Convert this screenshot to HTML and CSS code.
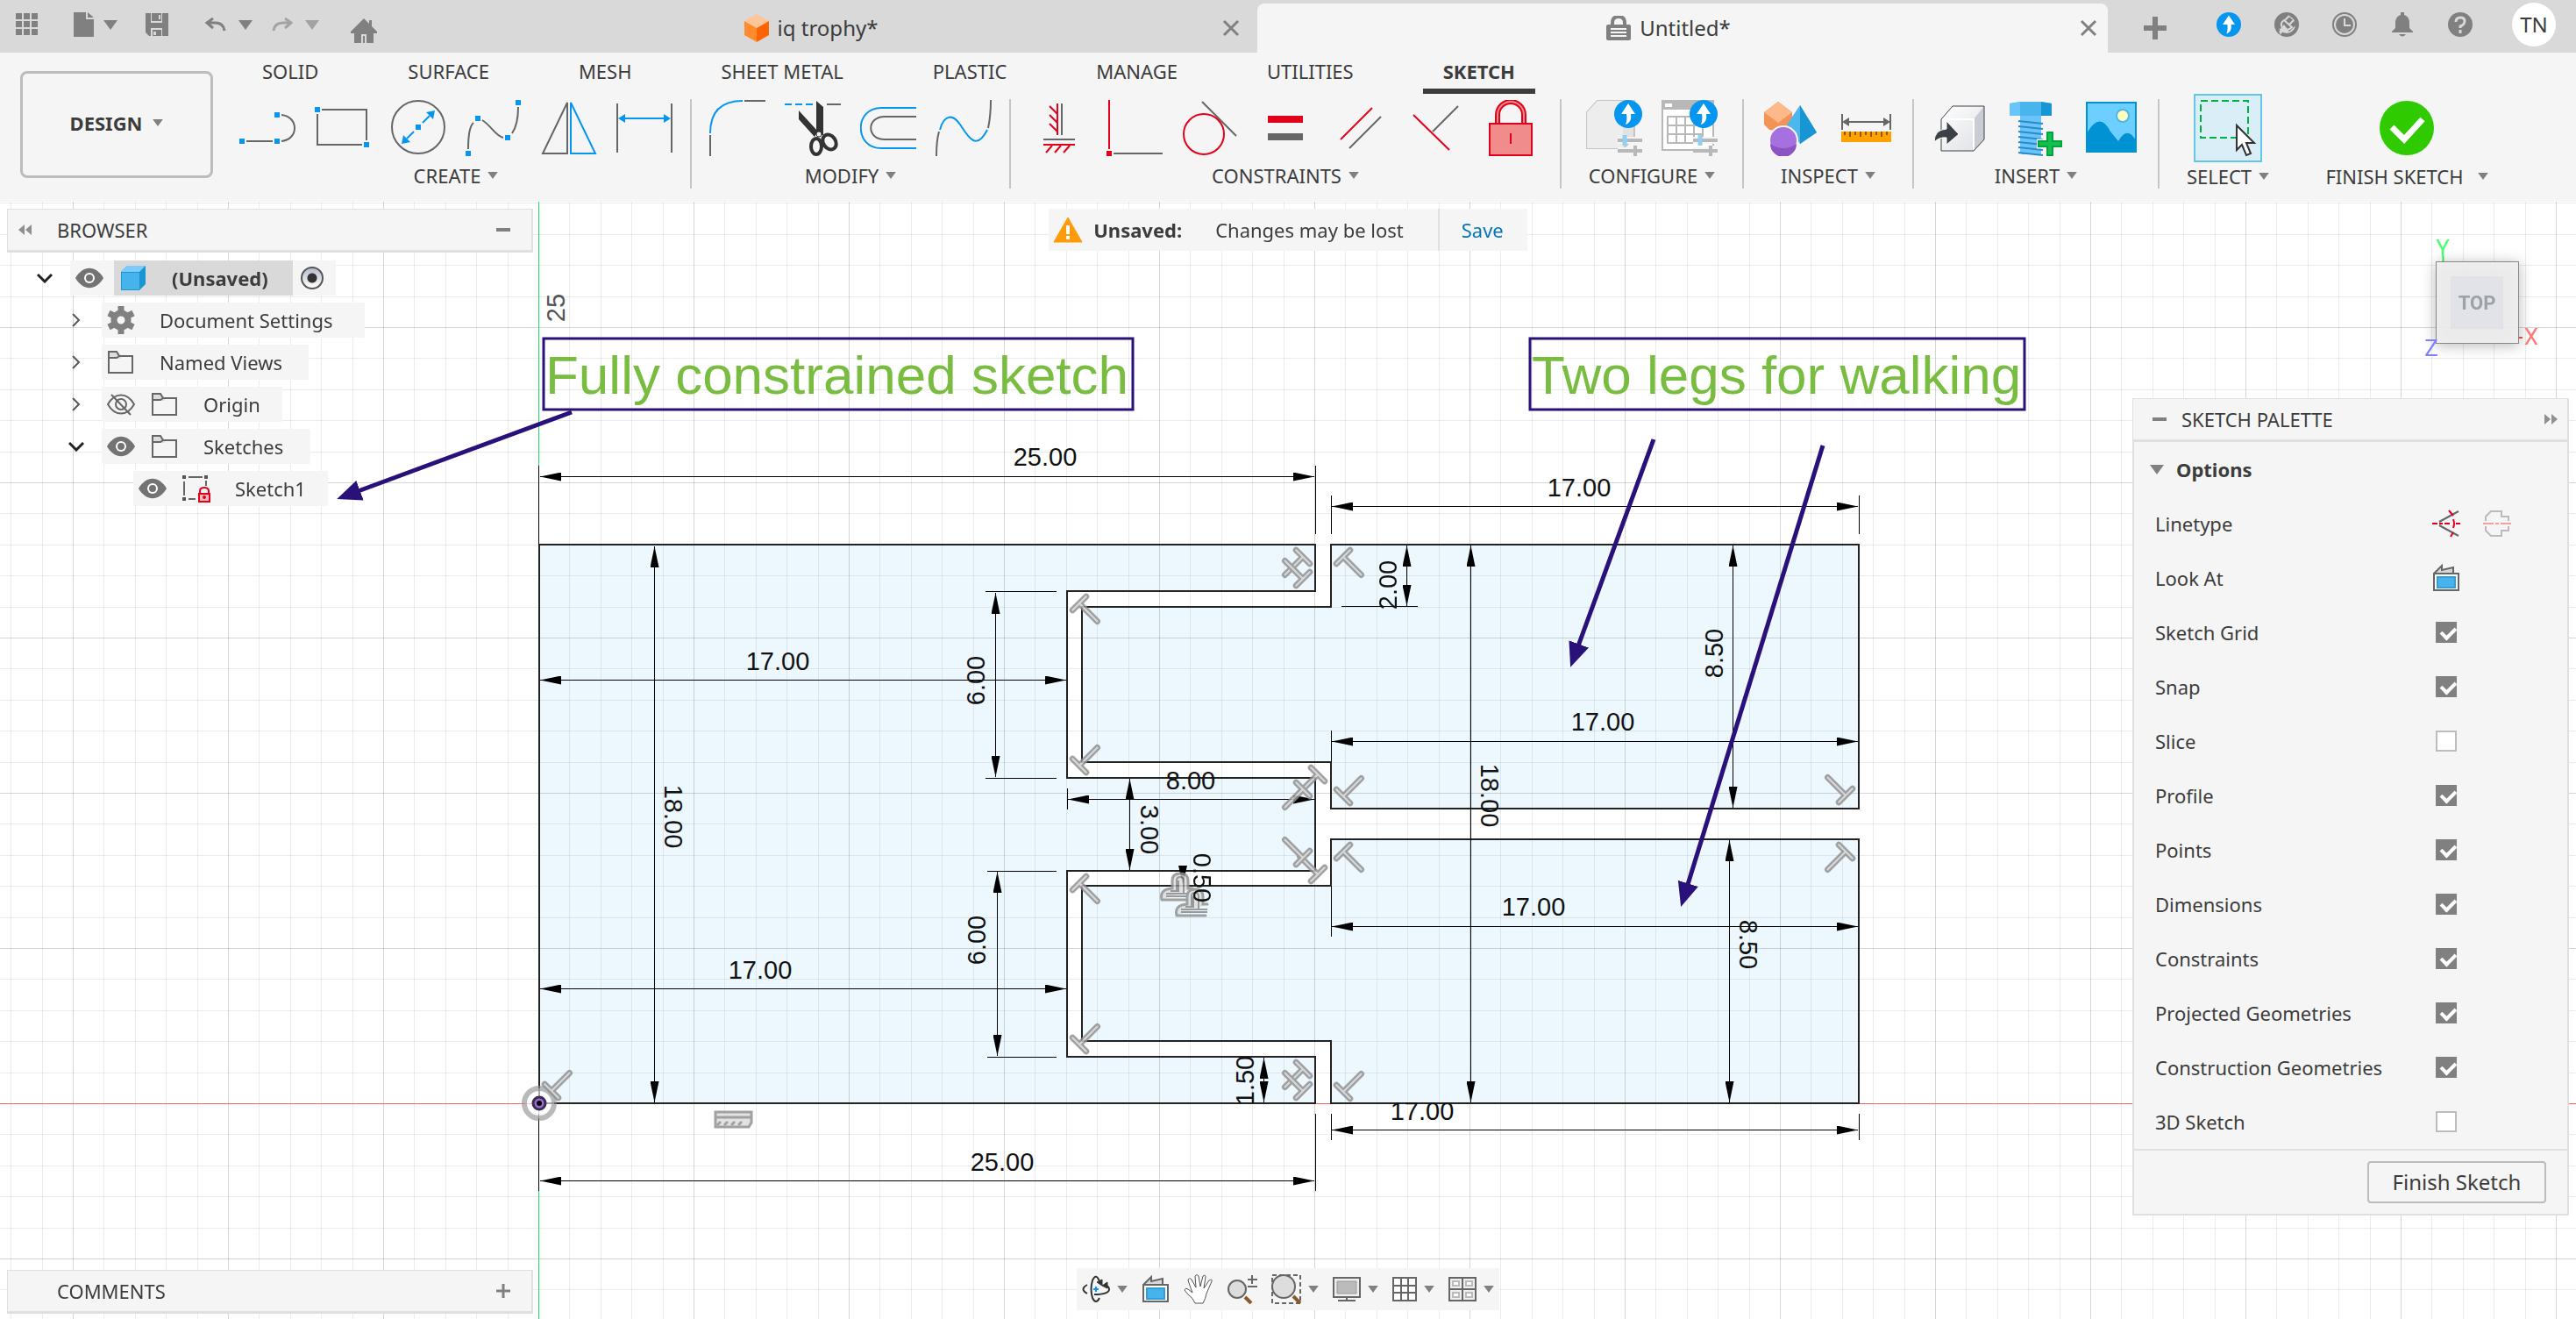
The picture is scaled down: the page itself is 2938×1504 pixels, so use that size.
FILE: index.html
```html
<!DOCTYPE html>
<html lang="en">
<head>
<meta charset="utf-8">
<title>Untitled* – Sketch</title>
<link rel="stylesheet" href="styles.css">
</head>
<body>
<svg class="defs" aria-hidden="true">
  <defs>
    <symbol id="i-tri" viewBox="0 0 16 11"><path d="M0 0h16L8 11z" fill="currentColor"/></symbol>
    <symbol id="i-close" viewBox="0 0 20 20"><path d="M2 2l16 16M18 2L2 18" stroke="#808080" stroke-width="3"/></symbol>
    <symbol id="i-up" viewBox="0 0 32 32"><circle cx="16" cy="16" r="16" fill="#0696f0"/><path d="M16 4l8 12h-5c1 6-1 10-6 12 1-3 2-7 1-12H8z" fill="#fff"/></symbol>
    <symbol id="i-eye" viewBox="0 0 32 24"><path d="M0 12C9-3 23-3 32 12C23 27 9 27 0 12z" fill="#737373"/><circle cx="16" cy="12" r="6" fill="#fff"/><circle cx="16" cy="12" r="4" fill="#737373"/></symbol>
    <symbol id="i-folder" viewBox="0 0 32 28"><path d="M2 2h10l4 4v4H2z" fill="#ddd"/><path d="M2 2h9l3 5h15v19H2zM2 9h9l3-2" fill="none" stroke="#666" stroke-width="2"/></symbol>
    <symbol id="i-right" viewBox="0 0 12 18"><path d="M2 2l7 7-7 7" fill="none" stroke="#555" stroke-width="2"/></symbol>
    <symbol id="i-down" viewBox="0 0 18 12"><path d="M1 2l8 8 8-8" fill="none" stroke="#222" stroke-width="3"/></symbol>
    <symbol id="i-look" viewBox="0 0 32 32"><path d="M2 11L11 2v5l13-3v7" fill="#d8d8d8" stroke="#666" stroke-width="2"/><path d="M2 11h28v19H2z" fill="#fff" stroke="#666" stroke-width="2"/><path d="M6 15h20v12H6z" fill="#47b3ec" stroke="#339fd8" stroke-width="2"/></symbol>
    <symbol id="i-sliders" viewBox="0 0 28 28"><path d="M0 9h28M0 21h28M20 15v12" stroke="#f5f5f5" stroke-width="8"/><path d="M0 9h28M0 21h28" stroke="#b8b8b8" stroke-width="4"/><path d="M20 15v12" stroke="#b8b8b8" stroke-width="4"/><path d="M8 3v12" stroke="#8fd0f5" stroke-width="5"/></symbol>
    <g id="perp"><path class="g-out" d="M-11 0H11M0 0V29"/><path class="g-in" d="M-11 0H11M0 0V29"/></g>
    <g id="offset"><path class="g-out g-fine" d="M3 31h33M3 31q-3-12 12-13V9q0-8 9-8t9 8v9h5"/><path class="g-fine2" d="M8 27h30M8 24h30M13 21h7V9q0-4 4-4t4 4v15M22 9v13"/></g>
    <marker id="tip" viewBox="0 0 24 10" markerWidth="24" markerHeight="10" refX="24" refY="5" orient="auto-start-reverse" markerUnits="userSpaceOnUse"><path d="M0 0L24 5L0 10z" fill="#000"/></marker>
    <marker id="callout-tip" viewBox="0 0 28 24" markerWidth="28" markerHeight="24" refX="8" refY="12" orient="auto" markerUnits="userSpaceOnUse"><path d="M0 0L28 12L0 24z" fill="#2a117a"/></marker>
    <pattern id="grid" x="614" y="1258" width="177" height="177" patternUnits="userSpaceOnUse">
      <path d="M35.5 0V177M71.5 0V177M106.5 0V177M142.5 0V177M0 35.5H177M0 71.5H177M0 106.5H177M0 142.5H177" stroke="#000" stroke-opacity=".075"/>
      <path d="M.5 0V177M0 .5H177" stroke="#000" stroke-opacity=".16"/>
    </pattern>
    <linearGradient id="white-box" x1="0" y1="0" x2="1" y2="1"><stop offset="0" stop-color="#fff"/><stop offset="1" stop-color="#dcdfe4"/></linearGradient>
  </defs>
</svg>

<header class="titlebar">
  <div class="quick">
    <button class="plain q-apps" aria-label="Data panel"><svg width="26" height="26" viewBox="0 0 26 26" fill="#808080"><path d="M1 0h7v7H1zM10 0h7v7h-7zM19 0h7v7h-7zM1 9h7v7H1zM10 9h7v7h-7zM19 9h7v7h-7zM1 18h7v7H1zM10 18h7v7h-7zM19 18h7v7h-7z"/></svg></button>
    <button class="plain q-file" aria-label="File"><svg width="24" height="28" viewBox="0 0 24 28" fill="#808080"><path d="M0 0h14v8h9v20H0zM16 0l7 6h-7z"/></svg><svg class="tri"><use href="#i-tri"/></svg></button>
    <button class="plain q-save" aria-label="Save file"><svg width="26" height="26" viewBox="0 0 26 26"><path d="M0 0h26v26H4l-4-4z" fill="#808080"/><path d="M6 0h13v11H6zM6 17h13v9H6z" fill="#d9d9d9"/><path d="M7 0h11v9H7zM8 19h10v7H8z" fill="#808080"/><path d="M15 2h2v5h-2zM9 21h3v4H9z" fill="#d9d9d9"/></svg></button>
    <button class="plain q-undo" aria-label="Undo"><svg width="24" height="16" viewBox="0 0 24 16" fill="none" stroke="#808080" stroke-width="3"><path d="M9 1L2 6l7 6M2 6h9q10 0 11 9"/></svg><svg class="tri"><use href="#i-tri"/></svg></button>
    <button class="plain q-redo" aria-label="Redo"><svg width="24" height="16" viewBox="0 0 24 16" fill="none" stroke="#a3a3a3" stroke-width="3"><path d="M15 1l7 5-7 6M22 6h-9Q3 6 2 15"/></svg><svg class="tri"><use href="#i-tri"/></svg></button>
    <button class="plain q-home" aria-label="Home"><svg width="30" height="28" viewBox="0 0 30 28" fill="#808080"><path d="M15 0l6 6V2h3v7l6 6v2h-4v11h-8V18h-6v10H4V17H0v-2zM14 20h2v8h-2z"/></svg></button>
  </div>
  <nav class="doc-tabs" aria-label="Documents">
    <div class="doc-tab"><a href="#trophy"><svg width="28" height="32" viewBox="0 0 28 32"><path d="M14 0l14 8-14 8L0 8z" fill="#ffc59a"/><path d="M0 8l14 8v16L0 24z" fill="#ff8b2c"/><path d="M28 8l-14 8v16l14-8z" fill="#ff6400"/></svg>iq trophy*</a><button class="plain" aria-label="Close iq trophy"><svg width="20" height="20"><use href="#i-close"/></svg></button></div>
    <div class="doc-tab doc-active"><a href="#untitled"><svg width="28" height="28" viewBox="0 0 28 28"><path d="M7 12V8q0-7 7-7t7 7v4" fill="none" stroke="#808080" stroke-width="4"/><rect y="10" width="28" height="18" rx="2" fill="#808080"/><path d="M5 15h18M5 19h18M5 23h18" stroke="#f5f5f5" stroke-width="2"/></svg>Untitled*</a><button class="plain" aria-label="Close Untitled"><svg width="20" height="20"><use href="#i-close"/></svg></button></div>
  </nav>
  <div class="account">
    <button class="plain new-tab" aria-label="New tab"><svg width="26" height="26" viewBox="0 0 26 26"><path d="M13 0v26M0 13h26" stroke="#808080" stroke-width="6"/></svg></button>
    <button class="plain" aria-label="Updates"><svg width="28" height="28"><use href="#i-up"/></svg></button>
    <button class="plain" aria-label="Extensions"><svg width="28" height="28" viewBox="0 0 28 28"><circle cx="14" cy="14" r="12" fill="none" stroke="#808080" stroke-width="4"/><path d="M7 18q-2-8 4-10l9 8q-3 6-9 5l-5 5z" fill="#d9d9d9"/><path d="M13 2l13 11-9 9-6-8-4 5-5-1V8z" fill="#808080"/><path d="M6 23l3-5q-3-6 2-9l9 8q-4 4-8 3M12 9l5-5M17 14l5-5" fill="none" stroke="#d9d9d9" stroke-width="2"/></svg></button>
    <button class="plain" aria-label="Job status"><svg width="28" height="28" viewBox="0 0 28 28"><circle cx="14" cy="14" r="13" fill="none" stroke="#808080" stroke-width="2"/><circle cx="14" cy="14" r="10" fill="#808080"/><path d="M14 7v8h7" fill="none" stroke="#d9d9d9" stroke-width="2"/></svg></button>
    <button class="plain" aria-label="Notifications"><svg width="28" height="28" viewBox="0 0 28 28" fill="#808080"><path d="M12 0h4v3q6 2 6 9v6l4 4v1H2v-1l4-4v-6q0-7 6-9zM10 25h8q-4 5-8 0z"/></svg></button>
    <button class="plain" aria-label="Help"><svg width="28" height="28" viewBox="0 0 28 28"><circle cx="14" cy="14" r="14" fill="#808080"/><path d="M9 11q0-5 5-5t5 4-5 6v2M14 20v4" fill="none" stroke="#d9d9d9" stroke-width="3"/></svg></button>
    <button class="plain avatar">TN</button>
  </div>
</header>

<div class="ribbon">
  <button class="design">DESIGN <svg class="tri tri-s"><use href="#i-tri"/></svg></button>
  <div class="ribbon-main">
    <nav class="modes" aria-label="Toolbar tabs">
      <a href="#solid">SOLID</a><a href="#surface">SURFACE</a><a href="#mesh">MESH</a><a href="#sheet">SHEET METAL</a><a href="#plastic">PLASTIC</a><a href="#manage">MANAGE</a><a href="#utilities">UTILITIES</a><a href="#sketch" class="mode-on">SKETCH</a>
    </nav>
    <div class="groups">
      <section class="group">
        <div class="tools">
          <button class="tool" aria-label="Line"><svg viewBox="0 0 64 64"><path class="k" d="M8 47h30M48 17c20 2 20 28 0 30"/><path class="b" d="M0 44h6v6H0zM40 44h6v6h-6zM40 14h6v6h-6z"/></svg></button>
          <button class="tool" aria-label="Rectangle"><svg viewBox="0 0 64 64"><path class="k" d="M8 11h51v35M54 51H3V16"/><path class="b" d="M0 8h6v6H0zM56 48h6v6h-6z"/></svg></button>
          <button class="tool" aria-label="Circle"><svg viewBox="0 0 64 64"><circle class="k" cx="32" cy="31" r="30"/><path class="bs" d="M37 26l8-8M27 36l-8 8"/><path class="b" d="M29 28h6v6h-6zM51 12l-2 10-8-8zM13 50l2-10 8 8z"/></svg></button>
          <button class="tool" aria-label="Spline"><svg viewBox="0 0 64 64"><path class="k" d="M3 56q0-25 6-30M19 23c10 6 15 18 24 20M53 38q7-10 7-30"/><path class="b" d="M0 58h6v6H0zM11 18h6v6h-6zM45 40h6v6h-6zM57 0h6v6h-6z"/></svg></button>
          <button class="tool" aria-label="Mirror"><svg viewBox="0 0 64 64"><path class="k" d="M30 3v58H2z"/><path class="bs" d="M34 3v58h28z"/></svg></button>
          <button class="tool" aria-label="Dimension"><svg viewBox="0 0 64 64"><path class="k" d="M1 4v56M63 4v56"/><path class="bs" d="M6 21h52"/><path class="b" d="M2 21l8-5v10zM62 21l-8-5v10z"/></svg></button>
        </div>
        <button class="menu">CREATE<svg class="tri tri-s"><use href="#i-tri"/></svg></button>
      </section>
      <section class="group">
        <div class="tools">
          <button class="tool" aria-label="Fillet"><svg viewBox="0 0 64 64"><path class="bs" d="M1 38C1 12 14 1 38 1"/><path class="k" d="M40 1h24M1 40v24"/></svg></button>
          <button class="tool" aria-label="Trim"><svg viewBox="0 0 64 64"><path class="bs" d="M0 5h34" stroke-dasharray="8 4"/><path class="k" d="M48 5h16"/><path d="M36 1l8 7v32h-8z M16 12l22 24-4 6L16 22z" fill="#333"/><ellipse cx="36" cy="53" rx="6" ry="9" fill="none" stroke="#333" stroke-width="4"/><ellipse cx="51" cy="48" rx="7" ry="9" transform="rotate(-35 51 48)" fill="none" stroke="#333" stroke-width="4"/><circle cx="39" cy="39" r="3" fill="#f5f5f5" stroke="#333"/></svg></button>
          <button class="tool" aria-label="Offset"><svg viewBox="0 0 64 64"><path class="bs" d="M64 9H24C-7 9-7 55 24 55H64"/><path class="k" d="M64 19H28C7 19 7 45 28 45H64"/></svg></button>
          <button class="tool" aria-label="Curvature"><svg viewBox="0 0 64 64"><path class="bs" d="M5 34C10 16 20 16 28 28S46 60 59 34"/><path class="k" d="M1 64q0-18 3-28M60 32q3-14 3-32"/></svg></button>
        </div>
        <button class="menu">MODIFY<svg class="tri tri-s"><use href="#i-tri"/></svg></button>
      </section>
      <section class="group group-mid">
        <div class="tools">
          <button class="tool" aria-label="Horizontal/Vertical"><svg viewBox="0 0 64 64"><path class="k" d="M35 4v36M14 45h36"/><path class="r" d="M30 4v36M30 16l-9-9M30 26l-9-9M30 36l-9-9M14 51h36M24 52l-7 8M34 52l-7 8M44 52l-7 8"/></svg></button>
          <button class="tool" aria-label="Coincident"><svg viewBox="0 0 64 64"><path class="r" d="M3 0v56"/><path d="M0 58h6v6H0z" fill="#e2001a"/><path class="k" d="M8 61h56"/></svg></button>
          <button class="tool" aria-label="Tangent"><svg viewBox="0 0 64 64"><path class="k" d="M23 2l39 39"/><circle class="r" cx="25" cy="39" r="23"/></svg></button>
          <button class="tool" aria-label="Equal"><svg viewBox="0 0 64 64"><path d="M12 18h40v8H12z" fill="#e2001a"/><path d="M12 38h40v8H12z" fill="#666"/></svg></button>
          <button class="tool" aria-label="Parallel"><svg viewBox="0 0 64 64"><path class="r" d="M9 45L45 9"/><path class="k" d="M19 55l36-36"/></svg></button>
          <button class="tool" aria-label="Perpendicular"><svg viewBox="0 0 64 64"><path class="r" d="M6 17l41 40"/><path class="k" d="M28 36L57 7"/></svg></button>
          <button class="tool" aria-label="Fix"><svg viewBox="0 0 64 64"><path d="M16 27V17a15 15 0 0 1 30 0v10" fill="none" stroke="#e2001a" stroke-width="6"/><path d="M16 27V17a15 15 0 0 1 30 0v10" fill="none" stroke="#f08c8c" stroke-width="2"/><path d="M7 27h48v36H7z" fill="#f08c8c" stroke="#e2001a" stroke-width="2"/><path class="r" d="M31 38v12"/></svg></button>
        </div>
        <button class="menu">CONSTRAINTS<svg class="tri tri-s"><use href="#i-tri"/></svg></button>
      </section>
      <section class="group group-wide">
        <div class="tools">
          <button class="tool" aria-label="Configure"><svg viewBox="0 0 64 64"><path d="M1 14L13 1h42v41L43 55H1z" fill="#e2e2e2" stroke="#c4c4c4" stroke-width="2"/><path d="M1 14h41v41H1zM1 14L13 1h42L43 14z" fill="#ededed"/><use href="#i-up" x="32" width="32" height="32"/><use href="#i-sliders" x="36" y="37" width="28" height="28"/></svg></button>
          <button class="tool" aria-label="Configuration table"><svg viewBox="0 0 64 64"><path d="M1 1h58v56H1z" fill="#fff" stroke="#b8b8b8" stroke-width="2"/><path d="M1 1h58v10H1z" fill="#b8b8b8"/><path d="M4 4h8v4H4z" fill="#fff"/><path d="M7 19h40v30H7zM7 29h40M7 39h40M17 19v30M27 19v30M37 19v30" fill="none" stroke="#b8b8b8" stroke-width="2"/><use href="#i-up" x="32" width="32" height="32"/><use href="#i-sliders" x="36" y="37" width="28" height="28"/></svg></button>
        </div>
        <button class="menu">CONFIGURE<svg class="tri tri-s"><use href="#i-tri"/></svg></button>
      </section>
      <section class="group group-end">
        <div class="tools">
          <button class="tool" aria-label="Interference"><svg viewBox="0 0 64 64"><path d="M18 2l16 12v12L20 36 8 34l-6-6V14z" fill="#f39355"/><path d="M18 2l16 12-16 12L2 14z" fill="#fdb98a"/><path d="M43 6l19 31-19 13-15-22z" fill="#4db6ea"/><path d="M43 6l19 31-19 13z" fill="#1896d3"/><circle cx="24" cy="46" r="16" fill="#a670e0" stroke="#f5f5f5" stroke-width="2"/><path d="M9 50a15 15 0 0 0 30 0q-15 10-30 0z" fill="#8a54c2"/></svg></button>
          <button class="tool" aria-label="Measure"><svg viewBox="0 0 64 64"><path class="k" d="M5 16v18M60 16v18M8 25h49"/><path d="M5 25l8-5v10zM60 25l-8-5v10z" fill="#666"/><path d="M4 36h57v12H4z" fill="#ffa200"/><path d="M8 36v4M14 36v6M20 36v4M26 36v6M32 36v4M38 36v6M44 36v4M50 36v6M56 36v4" stroke="#8a5a00" stroke-width="2"/></svg></button>
        </div>
        <button class="menu">INSPECT<svg class="tri tri-s"><use href="#i-tri"/></svg></button>
      </section>
      <section class="group group-end">
        <div class="tools">
          <button class="tool" aria-label="Derive"><svg viewBox="0 0 64 64"><path d="M10 22L23 7h36v38L47 58H10z" fill="url(#white-box)"/><path d="M47 22L59 7v38L47 58z" fill="#c8ccd3"/><path d="M10 22h37v36" fill="none" stroke="#fff" stroke-width="2"/><path d="M10 22L23 7h36v38L47 58H10z" fill="none" stroke="#3c4047" stroke-width="1"/><path d="M2 48q0-14 14-15v-9l14 15-14 12v-8q-8-1-14 5z" fill="#3c4047" stroke="#fff"/></svg></button>
          <button class="tool" aria-label="Fastener"><svg viewBox="0 0 64 64"><path d="M14 14h24v48H16l-2-2z" fill="#6ac4fb"/><path d="M12 24l28 3M12 30l28 3M12 36l28 3M12 42l28 3M12 48l28 3M12 54l28 3M12 60l28 3" stroke="#2a8cc4" stroke-width="2"/><path d="M2 4l12-2h24l12 2v14H2z" fill="#49b4ee"/><path d="M2 4l12-2v16H2z" fill="#6ac4fb"/><path d="M38 2l12 2v14H38z" fill="#1896d3"/><path d="M48 35v30M33 50h30" stroke="#f5f5f5" stroke-width="11"/><path d="M48 36v28M34 50h28" stroke="#00a63c" stroke-width="8"/><path d="M48 38v24M36 50h24" stroke="#14bf50" stroke-width="4"/></svg></button>
          <button class="tool" aria-label="Canvas"><svg viewBox="0 0 64 64"><path d="M4 3h56v56H4z" fill="#6ccfff"/><path d="M4 38q15-26 27-2l9 11q10-18 20-1v13H4z" fill="#0092d2"/><circle cx="45" cy="18" r="7" fill="#ffffc0" stroke="#56b5e2" stroke-width="2"/><path d="M4 3h56v56H4z" fill="none" stroke="#0092d2" stroke-width="2"/></svg></button>
        </div>
        <button class="menu">INSERT<svg class="tri tri-s"><use href="#i-tri"/></svg></button>
      </section>
      <section class="group group-select">
        <div class="tools">
          <button class="tool tool-on" aria-label="Select"><svg width="74" height="74" viewBox="2 2 74 74"><path d="M8 8h54v42H8z" fill="none" stroke="#00b140" stroke-width="2" stroke-dasharray="8 4"/><path d="M49 36v28l6-6 5 12 5-2-5-12h9z" fill="#fff" stroke="#333" stroke-width="2"/></svg></button>
        </div>
        <button class="menu">SELECT<svg class="tri tri-s"><use href="#i-tri"/></svg></button>
      </section>
      <section class="group group-finish">
        <div class="tools">
          <button class="tool" aria-label="Finish sketch"><svg viewBox="0 0 64 64"><circle cx="32" cy="32" r="31" fill="#2fcb00"/><path d="M15 31l14 14 21-23" fill="none" stroke="#fff" stroke-width="7"/></svg></button>
        </div>
        <button class="menu">FINISH SKETCH<svg class="tri tri-s tri-far"><use href="#i-tri"/></svg></button>
      </section>
    </div>
  </div>
</div>

<main class="workspace">
  <svg class="canvas" role="img" aria-label="Sketch drawing">
    <g transform="translate(0 -230)">
      <!-- closed profiles -->
      <g class="profile">
        <path d="M614 621H1500V674H1217V887H1500V993H1217V1205H1500V1258H614z"/>
        <path d="M1518 621H2120V922H1518V869H1234V692H1518z"/>
        <path d="M1518 957H2120V1258H1518V1187H1234V1010H1518z"/>
      </g>
      <rect y="230" width="100%" height="100%" fill="url(#grid)"/>
      <path d="M0 1258.5H6000" stroke="#ff6464"/>
      <path d="M614.5 230V6000" stroke="#14e664"/>
      <g class="outline">
        <path d="M615 621H1500V674H1217V887H1500V993H1217V1205H1500V1258H615z"/>
        <path d="M1518 621H2120V922H1518V869H1234V692H1518z"/>
        <path d="M1518 957H2120V1258H1518V1187H1234V1010H1518z"/>
      </g>
      <!-- extension lines -->
      <path class="ext" d="M614.5 531V621M1500.5 531V609M1518.5 565V609M2120.5 565V609M1124 674.5H1205M1124 887.5H1205M1126 993.5H1205M1126 1205.5H1205M1217.5 899V923M1530 691.5H1617M1518.5 833V870M1518.5 1010V1068M1518.5 1270V1300M2120.5 1270V1300M614.5 1270V1358M1500.5 1270V1358"/>
      <!-- dimension lines -->
      <g class="dim">
        <path d="M616 543.5H1499"/><path d="M1519 577.5H2119"/>
        <path d="M616 775.5H1216"/><path d="M746.5 623V1257"/>
        <path d="M1135.5 676V886"/><path d="M1218 911.5H1499"/>
        <path d="M1288.5 888V992"/><path d="M1137.5 994V1204"/>
        <path d="M616 1127.5H1216"/><path d="M1441.5 1206V1257"/>
        <path d="M1604.5 622V691"/><path d="M1677.5 622V1257"/>
        <path d="M1976.5 622V921"/><path d="M1519 845.5H2119"/>
        <path d="M1519 1056.5H2119"/><path d="M1972.5 958V1257"/>
        <path d="M1519 1288.5H2119"/><path d="M616 1346.5H1499"/>
      </g>
      <path d="M1344 987h10l-5 22z"/>
      <!-- geometric constraint glyphs -->
      <g class="glyphs">
        <use href="#perp" transform="translate(1532 635) rotate(-45)"/>
        <use href="#perp" transform="translate(1231 688) rotate(-45)"/>
        <use href="#perp" transform="translate(1231 873) rotate(-135)"/>
        <use href="#perp" transform="translate(1532 908) rotate(-135)"/>
        <use href="#perp" transform="translate(2105 907) rotate(135)"/>
        <use href="#perp" transform="translate(1532 971) rotate(-45)"/>
        <use href="#perp" transform="translate(2105 971) rotate(45)"/>
        <use href="#perp" transform="translate(1231 1007) rotate(-45)"/>
        <use href="#perp" transform="translate(1231 1191) rotate(-135)"/>
        <use href="#perp" transform="translate(1532 1245) rotate(-135)"/>
        <use href="#perp" transform="translate(1486 635) rotate(45)"/>
        <use href="#perp" transform="translate(1486 660) rotate(135)"/>
        <use href="#perp" transform="translate(1486 1219) rotate(45)"/>
        <use href="#perp" transform="translate(1486 1244) rotate(135)"/>
        <use href="#perp" transform="translate(1503 883) rotate(45)"/>
        <use href="#perp" transform="translate(1486 900) rotate(45)"/>
        <use href="#perp" transform="translate(1503 997) rotate(135)"/>
        <use href="#perp" transform="translate(1486 978) rotate(135)"/>
        <use href="#offset" transform="translate(1322 995)"/>
        <use href="#offset" transform="translate(1339 1013)"/>
        <path d="M816 1268h41v12l-3 5H816z" fill="#ddd" stroke="#909090" stroke-width="3"/>
        <path d="M816 1274h41M818 1283l4-4M826 1283l4-4M834 1283l4-4M842 1283l4-4" stroke="#909090" stroke-width="3"/>
      </g>
      <!-- origin point -->
      <circle cx="615" cy="1258" r="17" fill="#fff" fill-opacity=".6" stroke="#8c8c8c" stroke-opacity=".6" stroke-width="6"/>
      <circle cx="615" cy="1258" r="7" fill="#9a6cd4" stroke="#3c2d50" stroke-width="3"/>
      <circle cx="615" cy="1258" r="3"/>
      <g class="glyphs"><use href="#perp" transform="translate(629 1244) rotate(-135)"/></g>
      <!-- dimension values -->
      <g class="value">
        <text transform="translate(1192 521)" y="10">25.00</text>
        <text transform="translate(1801 556)" y="10">17.00</text>
        <text transform="translate(887 754)" y="10">17.00</text>
        <text transform="translate(768 931) rotate(90)" y="10">18.00</text>
        <text transform="translate(1113 776) rotate(-90)" y="10">6.00</text>
        <text transform="translate(1358 890)" y="10">8.00</text>
        <text transform="translate(1311 946) rotate(90)" y="10">3.00</text>
        <text transform="translate(1371 1001) rotate(90)" y="10">0.50</text>
        <text transform="translate(1114 1072) rotate(-90)" y="10">6.00</text>
        <text transform="translate(867 1106)" y="10">17.00</text>
        <text transform="translate(1420 1232) rotate(-90)" y="10">1.50</text>
        <text transform="translate(1583 667) rotate(-90)" y="10">2.00</text>
        <text transform="translate(1699 907) rotate(90)" y="10">18.00</text>
        <text transform="translate(1955 745) rotate(-90)" y="10">8.50</text>
        <text transform="translate(1828 823)" y="10">17.00</text>
        <text transform="translate(1749 1034)" y="10">17.00</text>
        <text transform="translate(1994 1077) rotate(90)" y="10">8.50</text>
        <text transform="translate(1622 1267)" y="10">17.00</text>
        <text transform="translate(1143 1325)" y="10">25.00</text>
        <text class="axis-value" transform="translate(634 351) rotate(-90)" y="10">25</text>
      </g>
      <!-- callouts -->
      <g class="callout">
        <rect x="620" y="386" width="672" height="81"/>
        <rect x="1745" y="386" width="564" height="81"/>
        <path d="M652 470L403 562"/>
        <path d="M1886 501L1798 742"/>
        <path d="M2079 508L1923 1015"/>
        <text x="622" y="449">Fully constrained sketch</text>
        <text x="1747" y="449">Two legs for walking</text>
      </g>
    </g>
  </svg>

  <div class="side-left">
    <section class="browser">
      <div class="bar"><svg class="dbl" width="16" height="12" viewBox="0 0 16 12" fill="#909090"><path d="M7 0v12L0 6zM15 0v12L8 6z"/></svg><h2>BROWSER</h2><button class="plain" aria-label="Collapse browser"><svg width="16" height="4"><path d="M0 0h16v4H0z" fill="#808080"/></svg></button></div>
      <ul class="tree">
        <li class="lv1"><svg class="chev" width="18" height="12"><use href="#i-down"/></svg><div class="node"><svg width="32" height="24"><use href="#i-eye"/></svg><span class="current"><svg width="28" height="28" viewBox="0 0 28 28"><path d="M0 7L7 0h21v21l-7 7H0z" fill="#1896d3"/><path d="M0 7L7 0h21l-7 7z" fill="#7ccbfb"/><path d="M1 8h20v19H1z" fill="#47b3ec"/></svg><b>(Unsaved)</b></span><input type="radio" class="activate" checked aria-label="Activate component"></div></li>
        <li class="lv2"><svg class="chev" width="12" height="18"><use href="#i-right"/></svg><div class="node n-doc"><svg width="32" height="32" viewBox="0 0 32 32"><circle cx="16" cy="16" r="8" fill="none" stroke="#808080" stroke-width="7"/><path d="M16 0v7M16 25v7M2 8l6 3M24 21l6 3M2 24l6-3M24 11l6-3" stroke="#808080" stroke-width="7"/></svg><span>Document Settings</span></div></li>
        <li class="lv2"><svg class="chev" width="12" height="18"><use href="#i-right"/></svg><div class="node n-views"><svg width="32" height="28"><use href="#i-folder"/></svg><span>Named Views</span></div></li>
        <li class="lv2"><svg class="chev" width="12" height="18"><use href="#i-right"/></svg><div class="node n-origin"><svg width="32" height="26" viewBox="0 0 32 26" fill="none" stroke="#666" stroke-width="2"><path d="M1 13C9-1 23-1 31 13C23 27 9 27 1 13zM5 2l22 23"/><circle cx="16" cy="13" r="6"/></svg><svg width="32" height="28"><use href="#i-folder"/></svg><span>Origin</span></div></li>
        <li class="lv2"><svg class="chev" width="18" height="12"><use href="#i-down"/></svg><div class="node n-sketches"><svg width="32" height="24"><use href="#i-eye"/></svg><svg width="32" height="28"><use href="#i-folder"/></svg><span>Sketches</span></div></li>
        <li class="lv3"><span class="chev"></span><div class="node n-sketch1"><svg width="32" height="24"><use href="#i-eye"/></svg><svg width="32" height="32" viewBox="0 0 32 32"><path d="M7 3h16M2 8v16M27 7v6M7 28h8" stroke="#666" stroke-width="2"/><path d="M0 1h4v4H0zM25 1h4v4h-4zM0 26h4v4H0z" fill="#555"/><path d="M20 22v-3q0-4 5-4t5 4v3" fill="none" stroke="#e2001a" stroke-width="2"/><path d="M19 22h12v9H19z" fill="#fbb" stroke="#e2001a" stroke-width="2"/><circle cx="25" cy="26" r="2" fill="#e2001a"/></svg><span>Sketch1</span></div></li>
      </ul>
    </section>
    <div class="bar"><h2 class="indent">COMMENTS</h2><button class="plain" aria-label="Add comment"><svg width="16" height="16" viewBox="0 0 16 16"><path d="M8 0v16M0 8h16" stroke="#808080" stroke-width="3"/></svg></button></div>
  </div>

  <div class="middle">
    <div class="notice" role="status">
      <svg width="34" height="30" viewBox="0 0 34 30"><path d="M17 1l16 28H1z" fill="#ff9a0a" stroke="#ff9a0a" stroke-linejoin="round"/><path d="M17 10v10M17 22v4" stroke="#fff" stroke-width="4"/></svg>
      <b>Unsaved:</b><span class="notice-text">Changes may be lost</span><a href="#save">Save</a>
    </div>
    <div class="navbar">
      <button class="plain" aria-label="Orbit"><svg width="32" height="32" viewBox="0 0 32 32" fill="none" stroke="#333" stroke-width="2"><path d="M20 7Q16-3 12 6q-3 10 0 20 4 8 8 0M6 11q-9 5 0 10M14 22q17 0 17-6 0-3-5-5" stroke-width="2"/><path d="M17 8l6-3v7zM23 12l6-4v7z" fill="#333" stroke-width="1"/><path d="M16 13v6M13 16h6" stroke="#0696f0"/></svg><svg class="tri tri-n"><use href="#i-tri"/></svg></button>
      <button class="plain" aria-label="Look at"><svg width="32" height="32"><use href="#i-look"/></svg></button>
      <button class="plain" aria-label="Pan"><svg width="34" height="36" viewBox="0 0 34 36"><path d="M13 34q-2-6-8-10l-4-5q1-3 4-1l5 4L5 8q1-4 4-1l5 9-1-13q2-3 4 0l2 12 3-12q3-2 3 1l-2 13 6-9q4-2 3 1l-6 14q-1 6-4 11z" fill="#fff" stroke="#555"/></svg></button>
      <button class="plain" aria-label="Zoom"><svg width="34" height="34" viewBox="0 0 34 34"><path d="M20 26l7 7" stroke="#8a5a2c" stroke-width="4"/><circle cx="11" cy="17" r="10" fill="#ddd" stroke="#666" stroke-width="2"/><path d="M28 1v10M23 6h11M23 14h11" stroke="#666" stroke-width="2"/></svg></button>
      <button class="plain" aria-label="Fit"><svg width="34" height="34" viewBox="0 0 34 34"><path d="M1 1h32v32H1z" fill="none" stroke="#666" stroke-width="2" stroke-dasharray="5 3"/><path d="M25 25l8 8" stroke="#8a5a2c" stroke-width="4"/><circle cx="14" cy="14" r="13" fill="#ddd" stroke="#666" stroke-width="2"/></svg><svg class="tri tri-n"><use href="#i-tri"/></svg></button>
      <button class="plain" aria-label="Display settings"><svg width="32" height="28" viewBox="0 0 32 28"><path d="M1 1h30v22H1z" fill="#eee" stroke="#666" stroke-width="2"/><path d="M5 5h22v14H5z" fill="#bbb" stroke="#999"/><path d="M6 27h20M16 23v4" stroke="#666" stroke-width="2"/></svg><svg class="tri tri-n"><use href="#i-tri"/></svg></button>
      <button class="plain" aria-label="Grid and snaps"><svg width="28" height="28" viewBox="0 0 28 28"><path d="M1 1h26v26H1zM10 1v26M18 1v26M1 10h26M1 18h26" fill="#fff" stroke="#666" stroke-width="2"/></svg><svg class="tri tri-n"><use href="#i-tri"/></svg></button>
      <button class="plain" aria-label="Viewports"><svg width="32" height="28" viewBox="0 0 32 28"><path d="M1 1h30v26H1zM16 1v26M1 14h30" fill="#eee" stroke="#666" stroke-width="2"/><path d="M5 5h7v5H5zM20 5h7v5h-7zM5 18h7v5H5zM20 18h7v5h-7z" fill="#fff" stroke="#bbb" stroke-width="2"/></svg><svg class="tri tri-n"><use href="#i-tri"/></svg></button>
    </div>
  </div>

  <div class="side-right">
    <svg class="cube" width="160" height="180" viewBox="2750 266 160 180" role="img" aria-label="View cube">
      <path d="M2786.5 292v8" stroke="#1eff50" stroke-width="2"/><path d="M2872 385h5" stroke="#ff5050" stroke-width="2"/>
      <rect class="cube-face" x="2778.5" y="298.5" width="94" height="93"/>
      <rect x="2795" y="315" width="60" height="60" fill="#d8dce8" fill-opacity=".5"/>
      <text x="2825" y="353" class="cube-label">TOP</text>
      <text x="2786" y="292" class="cube-axis" fill="#46ff6e">Y</text>
      <text x="2887" y="393" class="cube-axis" fill="#ff7878">X</text>
      <text x="2773" y="406" class="cube-axis" fill="#7d7dff">Z</text>
    </svg>
    <section class="palette">
      <div class="bar"><button class="plain" aria-label="Minimize palette"><svg width="16" height="4"><path d="M0 0h16v4H0z" fill="#808080"/></svg></button><h2>SKETCH PALETTE</h2><svg width="16" height="12" viewBox="0 0 16 12" fill="#909090"><path d="M0 0v12l7-6zM8 0v12l7-6z"/></svg></div>
      <div class="options">
        <h3><svg class="tri"><use href="#i-tri"/></svg>Options</h3>
        <div class="opt"><span>Linetype</span><div class="opt-icons"><button class="plain" aria-label="Construction"><svg width="32" height="32" viewBox="0 0 32 32"><path d="M8 14L30 2M8 18l22 12" stroke="#666" stroke-width="2"/><path d="M0 16h6M8 16h4M14 16h6M27 16h5M19 1l5 6M24 11q2 5 0 10M24 26l-3 5" fill="none" stroke="#e2001a" stroke-width="2"/></svg></button><button class="plain" aria-label="Centerline"><svg width="32" height="32" viewBox="0 0 32 32" fill="none"><path d="M3 13V8l6-6h12v6h8v5M3 19v5l6 6h12v-6h8v-5" stroke="#bbb" stroke-width="2"/><path d="M0 16h12M14 16h4M20 16h12" stroke="#f4a0a0" stroke-width="2"/></svg></button></div></div>
        <div class="opt"><span>Look At</span><div class="opt-icons"><button class="plain" aria-label="Look at sketch"><svg width="32" height="32"><use href="#i-look"/></svg></button></div></div>
        <label class="opt">Sketch Grid<input type="checkbox" checked></label>
        <label class="opt">Snap<input type="checkbox" checked></label>
        <label class="opt">Slice<input type="checkbox"></label>
        <label class="opt">Profile<input type="checkbox" checked></label>
        <label class="opt">Points<input type="checkbox" checked></label>
        <label class="opt">Dimensions<input type="checkbox" checked></label>
        <label class="opt">Constraints<input type="checkbox" checked></label>
        <label class="opt">Projected Geometries<input type="checkbox" checked></label>
        <label class="opt">Construction Geometries<input type="checkbox" checked></label>
        <label class="opt">3D Sketch<input type="checkbox"></label>
      </div>
      <div class="palette-foot"><button class="finish">Finish Sketch</button></div>
    </section>
  </div>
</main>
</body>
</html>
```
FILE: styles.css
```css
* { box-sizing: border-box; }
body {
  margin: 0;
  min-height: 100vh;
  display: flex;
  flex-direction: column;
  background: #fff;
  color: #3c3c3c;
  font-family: "Noto Sans", "Open Sans", sans-serif;
  font-size: 22px;
  line-height: 28px;
}
h2, h3, ul { margin: 0; padding: 0; }
h2 { font-size: 22px; font-weight: 400; }
h3 { font-size: 22px; font-weight: 700; }
button { font: inherit; color: inherit; cursor: pointer; }
a { color: inherit; text-decoration: none; }
svg { display: block; flex: none; }
.defs { position: absolute; width: 0; height: 0; }
.plain { display: flex; align-items: center; padding: 0; border: 0; background: none; }
.tri { width: 16px; height: 11px; color: #808080; }
.tri-s { width: 12px; height: 8px; }
.tri-n { width: 12px; height: 8px; }

/* title bar */
.titlebar { display: flex; height: 60px; background: #d9d9d9; }
.quick { display: flex; width: 448px; padding: 0 0 4px 17px; }
.quick .plain { gap: 10px; }
.q-file { margin-left: 41px; }
.q-save { margin-left: 32px; }
.quick .q-undo { margin-left: 42px; gap: 14px; }
.quick .q-redo { margin-left: 22px; gap: 14px; }
.q-redo .tri { color: #a3a3a3; }
.q-home { margin-left: 36px; padding-top: 14px; }
.doc-tabs { display: flex; flex: 1; padding-top: 4px; font-size: 24px; }
.doc-tab { display: flex; align-items: center; flex: 1; padding: 0 20px 0 8px; }
.doc-tab a { display: flex; align-items: center; justify-content: center; gap: 10px; flex: 1; }
.doc-active { background: #f5f5f5; border-radius: 8px 8px 0 0; padding: 0 12px 0 0; }
.account { display: flex; align-items: center; gap: 38px; width: 534px; padding: 0 23px 4px 41px; }
.new-tab { margin-right: 19px; padding-top: 8px; }
.avatar { justify-content: center; width: 50px; height: 50px; margin-left: 7px; border-radius: 50%; background: #fff; font-size: 24px; }

/* ribbon */
.ribbon { display: flex; height: 170px; background: #f5f5f5; }
.design {
  display: flex; align-items: center; justify-content: center; gap: 12px;
  width: 220px; height: 122px; margin: 21px 10px 0 23px; padding: 0 0 4px;
  border: 3px solid #bcbcbc; border-radius: 8px; background: none; font-weight: 700;
}
.ribbon-main { flex: 1; }
.modes { display: flex; height: 47px; gap: 56px; padding-left: 23px; }
.modes a { padding: 7px 23px 0; border-bottom: 6px solid transparent; white-space: nowrap; }
.modes .mode-on { font-weight: 700; border-color: #3c3c3c; }
.groups { display: flex; }
.group { position: relative; display: flex; flex-direction: column; align-items: center; height: 110px; padding: 0 9px; }
.group:nth-child(-n+6) { border-right: 2px solid #c6c6c6; height: 102px; margin-top: 6px; }
.group:nth-child(-n+6) .tools { margin-top: -6px; }
.group-mid { padding: 0 12px; }
.group-wide { padding: 0 17px; }
.group-end { padding: 0 10px; }
.group-select { width: 156px; }
.group-finish { width: 252px; }
.tools { display: flex; height: 78px; }
.tool { display: flex; align-items: center; justify-content: center; width: 86px; height: 78px; padding: 0; border: 0; background: none; }
.tool svg { width: 64px; height: 64px; }
.tool-on { width: 78px; border: 2px solid #64c5ea; background: #d9eef7; }
.tool-on svg { width: 74px; height: 74px; }
.menu { display: flex; align-items: center; gap: 8px; height: 38px; padding: 0; border: 0; background: none; white-space: nowrap; color: #3c3c3c; }
.tri-far { margin-left: 8px; }
.k { fill: none; stroke: #666; stroke-width: 2; }
.bs { fill: none; stroke: #0696f0; stroke-width: 2; }
.b { fill: #0696f0; }
.r { fill: none; stroke: #e2001a; stroke-width: 2; }

/* workspace */
.workspace { position: relative; flex: 1; display: grid; grid-template-columns: 600px 1fr 600px; padding: 8px 8px 6px; overflow: hidden; }
.canvas { position: absolute; inset: 0; width: 100%; height: 100%; }
.side-left, .middle, .side-right { position: relative; display: flex; flex-direction: column; justify-content: space-between; }
.side-right { align-items: flex-end; justify-content: flex-start; }
.middle { align-items: center; }
.bar { display: flex; align-items: center; height: 50px; padding: 0 24px 0 12px; background: #f5f5f5; border: 1px solid #e0e0e0; border-width: 1px 2px 3px 1px; }
.bar h2 { flex: 1; margin-left: 28px; }
.bar .indent { margin-left: 44px; }

/* browser tree */
.tree { list-style: none; padding-top: 9px; display: grid; gap: 8px; }
.tree li { display: flex; align-items: center; height: 40px; }
.chev { width: 18px; margin-right: 20px; }
.lv1 { padding-left: 34px; }
.lv2 { padding-left: 70px; }
.lv3 { padding-left: 106px; }
.node { display: flex; align-items: center; gap: 18px; height: 40px; padding: 0 14px 0 6px; background: #f5f5f5; white-space: nowrap; }
.node > span:last-child { margin-left: 10px; }
.n-doc { width: 300px; }
.n-views { width: 236px; }
.n-origin { width: 206px; }
.n-sketches { width: 238px; }
.n-sketch1 { width: 222px; }
.current { display: flex; align-items: center; gap: 30px; width: 204px; height: 40px; padding-left: 8px; margin-left: -6px; background: #d9d9d9; }
.activate { appearance: none; width: 26px; height: 26px; margin: 0 0 0 -9px; border: 2px solid #555; border-radius: 50%; background: radial-gradient(circle, #333 0 5px, transparent 6px), linear-gradient(#b4bccd, #fff); }

/* notice and navigation bar */
.notice { display: flex; align-items: center; height: 48px; padding: 0 27px 0 5px; background: #f5f5f5; white-space: nowrap; }
.notice b { margin-left: 12px; }
.notice-text { margin-left: 38px; padding-right: 39px; line-height: 48px; border-right: 2px solid #e0e0e0; }
.notice a { margin-left: 25px; color: #0675b8; }
.navbar { display: flex; align-items: center; gap: 16px; height: 48px; margin-bottom: 4px; padding: 0 6px; background: #f5f5f5; }
.navbar .plain { gap: 8px; }

/* view cube */
.cube { margin: 28px 20px 8px 0; }
.cube-face { fill: #f0f0f0; fill-opacity: .9; stroke: #888; filter: drop-shadow(0 2px 8px rgba(0, 0, 0, .3)); }
.cube-label { font: 700 22px Roboto, sans-serif; fill: #9ca3a6; text-anchor: middle; }
.cube-axis { font: 400 26px Roboto, sans-serif; text-anchor: middle; }

/* sketch palette */
.palette { width: 498px; }
.palette .bar { gap: 0; padding: 0 10px 0 22px; }
.palette .bar h2 { margin-left: 17px; }
.options { background: #f5f5f5; border: 2px solid #e0e0e0; border-top: 0; }
.options h3 { display: flex; align-items: center; gap: 14px; height: 62px; padding-left: 18px; }
.opt { display: grid; grid-template-columns: 320px 1fr; align-items: center; height: 62px; padding-left: 24px; }
.opt-icons { display: flex; gap: 26px; margin-left: -4px; }
.opt input { appearance: none; position: relative; width: 24px; height: 24px; margin: 0; border: 2px solid #bcbcbc; background: #fff; }
.opt input:checked { border-color: #808080; background: #808080; }
.opt input:checked::before { content: ""; position: absolute; left: 7px; top: 1px; width: 7px; height: 13px; border: solid #fff; border-width: 0 4px 4px 0; transform: rotate(45deg); }
.palette-foot { display: flex; justify-content: flex-end; padding: 12px 24px; background: #f5f5f5; border: 2px solid #e0e0e0; border-top: 0; }
.finish { width: 204px; height: 48px; padding: 0; border: 2px solid #bcbcbc; border-radius: 4px; background: none; font-size: 24px; }

/* drawing */
.profile { fill: #ecf8fe; }
.outline { fill: none; stroke: #222; stroke-width: 2; }
.ext { fill: none; stroke: #000; }
.dim path { stroke: #000; marker-start: url(#tip); marker-end: url(#tip); }
.g-out { fill: none; stroke: #909090; stroke-width: 7; stroke-linecap: round; }
.g-in { fill: none; stroke: #d4d4d4; stroke-width: 2; stroke-linecap: round; }
.g-fine { fill: #ddd; stroke-width: 3; }
.g-fine2 { fill: none; stroke: #888; stroke-width: 2; }
.glyphs { opacity: .85; }
.value { font: 29px "Liberation Sans", sans-serif; fill: #111; text-anchor: middle; }
.axis-value { fill: #555; }
.callout rect { fill: none; stroke: #2a117a; stroke-width: 3; }
.callout path { fill: none; stroke: #2a117a; stroke-width: 5; marker-end: url(#callout-tip); }
.callout text { font: 62px "Liberation Sans", sans-serif; fill: #78bd3f; }
```
